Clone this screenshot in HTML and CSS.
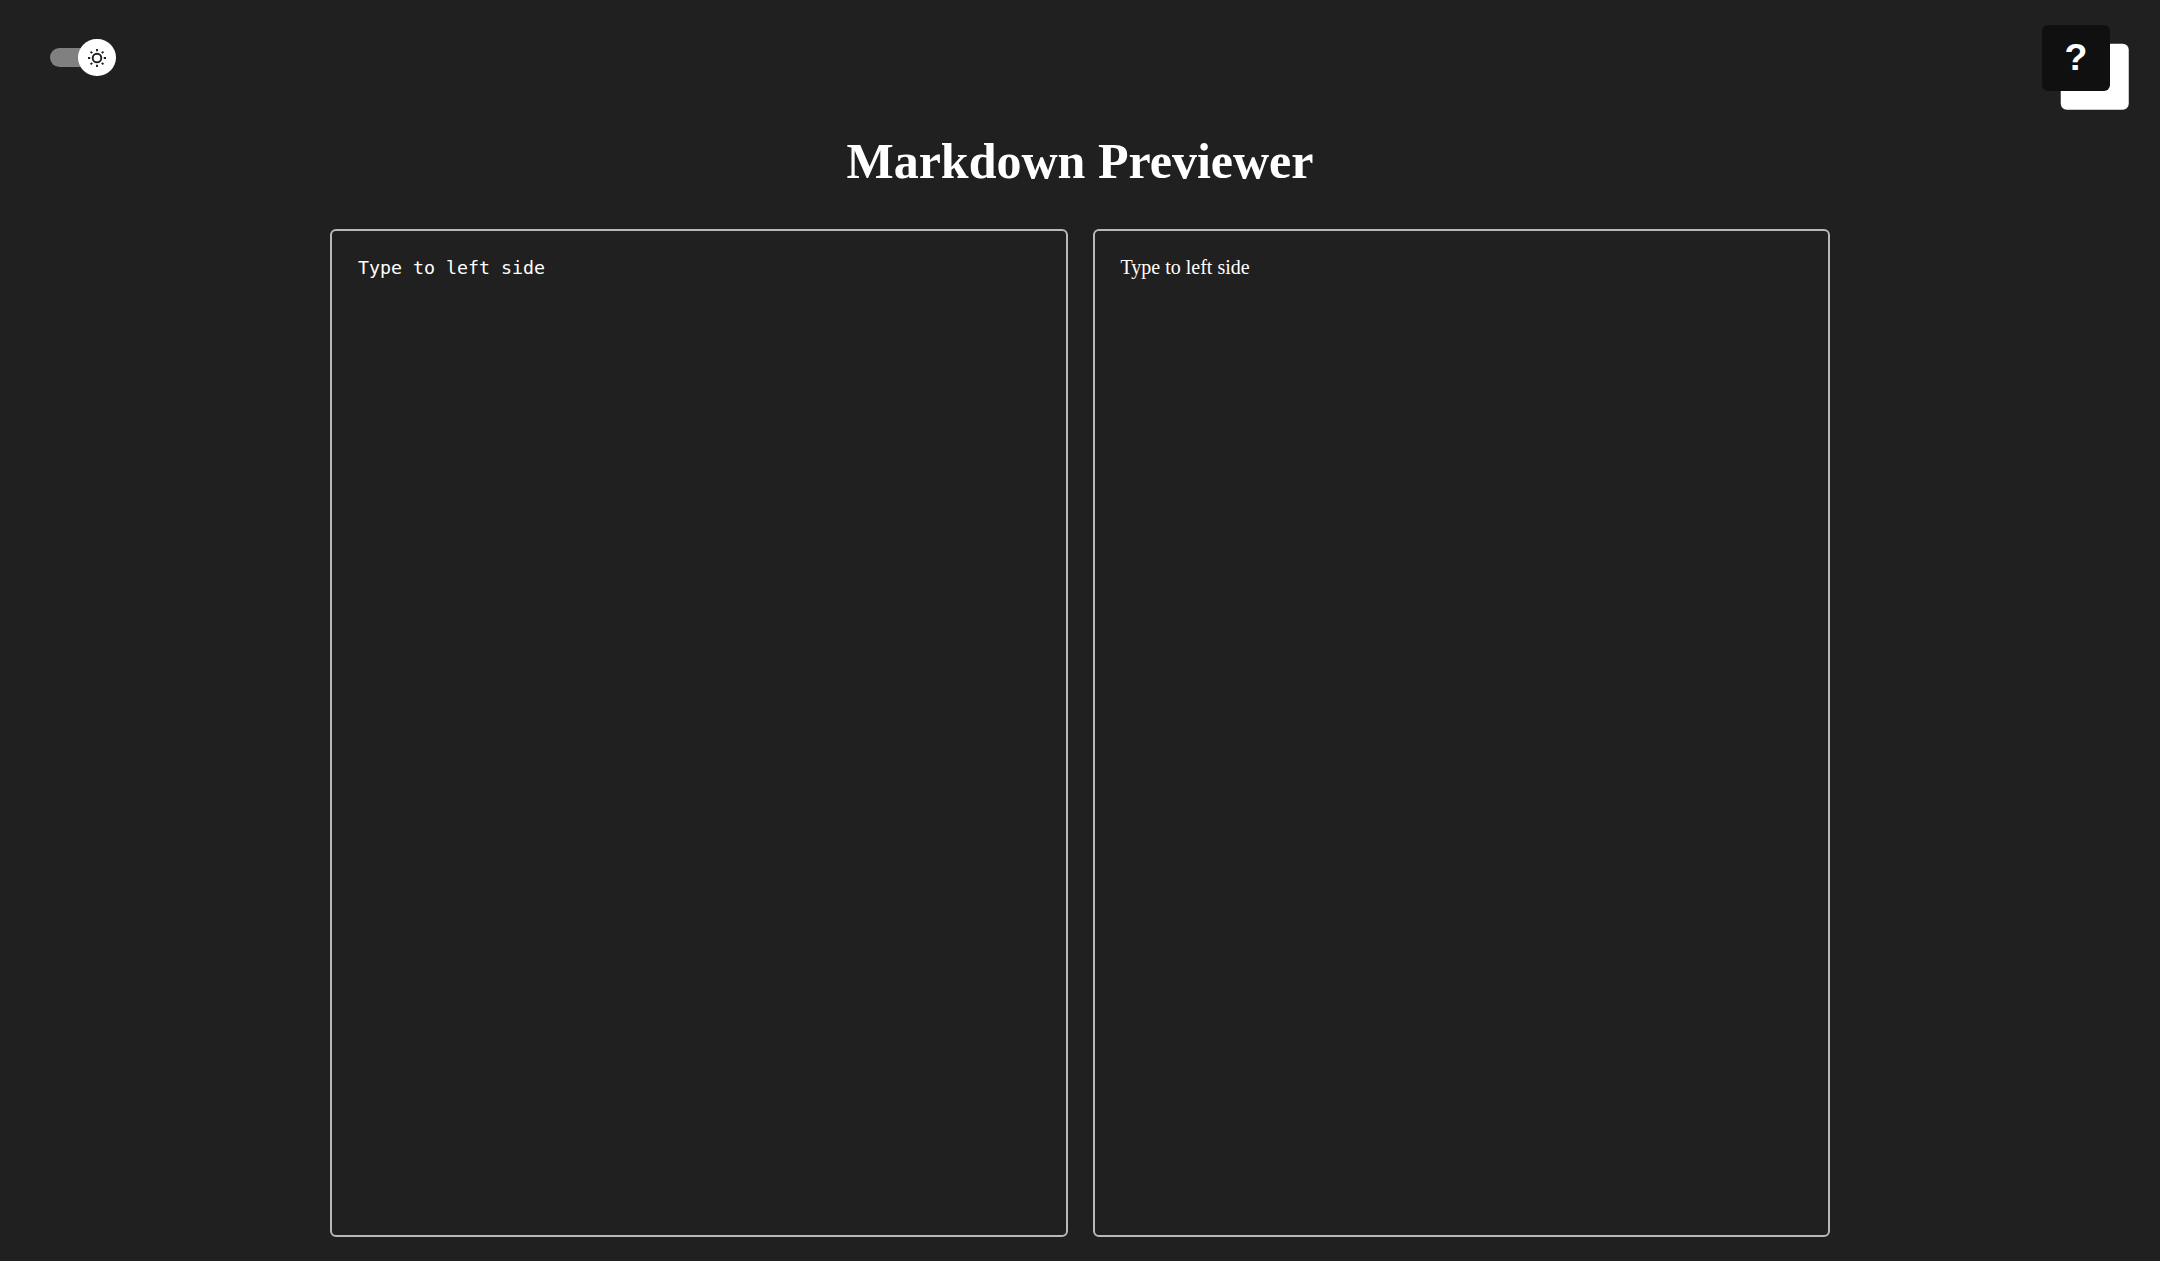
FILE: index.html
```html
<!DOCTYPE html>
<html lang="en">
<head>
<meta charset="utf-8">
<title>Markdown Previewer</title>
<link rel="stylesheet" href="styles.css">
</head>
<body>
<header class="topbar">
  <button class="toggle" aria-label="Theme">
    <span class="toggle-knob">
      <svg class="sun" viewBox="0 0 20 20" fill="none" stroke="#202020" stroke-width="1.9">
        <circle cx="10" cy="10" r="4.3"/>
        <path d="M10 1v2.2M10 16.8V19M1 10h2.2M16.8 10H19M3.6 3.6l1.6 1.6M14.8 14.8l1.6 1.6M3.6 16.4l1.6-1.6M14.8 5.2l1.6-1.6"/>
      </svg>
    </span>
  </button>
  <button class="help">?</button>
</header>
<main class="container">
  <h1 class="title">Markdown Previewer</h1>
  <div class="panels">
    <textarea class="panel editor" spellcheck="false">Type to left side</textarea>
    <section class="panel preview"><p class="text">Type to left side</p></section>
  </div>
</main>
</body>
</html>
```
FILE: styles.css
```css
* { box-sizing: border-box; margin: 0; padding: 0; }
body {
  height: 1261px;
  overflow: hidden;
  background: #202020;
  color: #fff;
  font-family: "Liberation Serif", "Times New Roman", serif;
  font-size: 20px;
}
.topbar {
  display: flex;
  justify-content: space-between;
  align-items: flex-start;
  height: 116px;
  padding: 25px 50px 0;
}
.toggle {
  display: flex;
  align-items: center;
  justify-content: flex-end;
  width: 62.5px;
  height: 19px;
  margin-top: 23px;
  border: 0;
  border-radius: 10px;
  background: #808080;
}
.toggle-knob {
  display: flex;
  flex: none;
  align-items: center;
  justify-content: center;
  width: 37.5px;
  height: 37.5px;
  margin-right: -3.25px;
  border-radius: 50%;
  background: #fff;
}
.sun { width: 20px; height: 20px; }
.help {
  width: 68px;
  height: 66px;
  padding-bottom: 2px;
  border: 0;
  border-radius: 6px;
  background: #101010;
  box-shadow: 18.75px 18.75px 0 #fff;
  color: #fff;
  font: bold 37.5px "Liberation Sans", Arial, sans-serif;
}
.container { width: 1500px; margin: 0 auto; }
.title {
  height: 113px;
  padding-top: 17px;
  font-size: 50px;
  line-height: 57px;
  text-align: center;
}
.panels {
  display: grid;
  grid-template-columns: 1fr 1fr;
  gap: 25px;
  height: 1008px;
}
.panel {
  min-width: 0;
  padding: 25px 26px;
  border: 2px solid #b8b8b8;
  border-radius: 6px;
  background: #202020;
  color: #fff;
}
.editor {
  resize: none;
  outline: 0;
  font: 18.3px/24px "DejaVu Sans Mono", monospace;
}
.preview { padding-top: 24px; font-size: 20px; line-height: 24px; }
```
